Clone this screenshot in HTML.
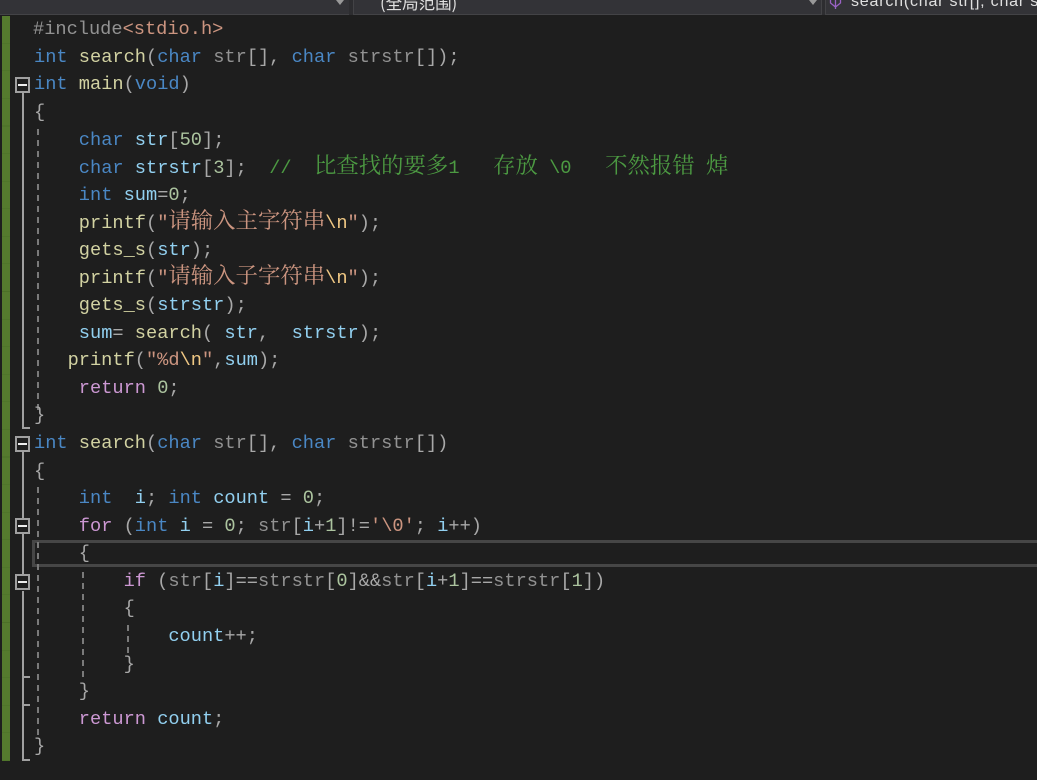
<!DOCTYPE html>
<html lang="zh">
<head>
<meta charset="utf-8">
<style>
html,body{margin:0;padding:0;background:#1e1e1e;}
#r{position:relative;width:1037px;height:780px;overflow:hidden;background:#1e1e1e;font-family:"Liberation Mono","Noto Serif CJK SC",monospace;font-size:18.67px;color:#a8a8a8;}
pre{position:absolute;margin:0;left:34px;height:27.58px;font:inherit;line-height:27.58px;white-space:pre;}
.a{position:absolute;}
.k{color:#4a87c4}.f{color:#d2d2a2}.v{color:#92d0f0}.s{color:#cc9580}.e{color:#f0c884}.c{color:#4c9a42}.p{color:#929292}.n{color:#acc49f}.o{color:#cc98d3}.g{color:#929292}
i{font-style:normal;font-family:"Noto Serif CJK SC","Noto Sans CJK SC",serif;font-size:22.4px;line-height:1;}
.box{position:absolute;left:15px;width:11px;height:12px;border:2px solid #a0a0a0;background:#1e1e1e;}
.box:after{content:"";position:absolute;left:1px;top:5px;width:9px;height:2px;background:#ececec;}
.vl{position:absolute;left:22px;width:2px;background:#a0a0a0;}
.hl{position:absolute;left:22px;width:8px;height:2px;background:#a0a0a0;}
.d{position:absolute;width:2px;background:repeating-linear-gradient(to bottom,#7a7a7a 0,#7a7a7a 6px,transparent 6px,transparent 11px);}
.cb{position:absolute;top:0;height:14px;background:#333337;border-bottom:1px solid #434346;}
.tri{position:absolute;top:0;width:0;height:0;border-left:4px solid transparent;border-right:4px solid transparent;border-top:5px solid #999;}
</style>
</head>
<body>
<div id="r">
  <!-- header combos -->
  <div class="a" style="left:0;top:0;width:1037px;height:15px;background:#2d2d30;"></div>
  <div class="cb" style="left:0;width:349px;"></div>
  <div class="cb" style="left:353px;width:467px;border-left:1px solid #434346;border-right:1px solid #434346;"></div>
  <div class="cb" style="left:825px;width:212px;border-left:1px solid #434346;"></div>
  <div class="tri" style="left:336px;"></div>
  <div class="tri" style="left:809px;"></div>
  <div class="a" style="left:380px;top:-8px;font:16.500px/20px 'Noto Sans CJK SC',sans-serif;color:#e0e0e0;white-space:pre;">(全局范围)</div>
  <div class="a" style="left:851px;top:0;width:186px;height:14px;overflow:hidden;"><div style="position:absolute;left:0;top:-8px;font:16px/20px 'Liberation Sans',sans-serif;letter-spacing:.8px;color:#e0e0e0;white-space:pre;">search(char str[], char str</div></div>
  <svg class="a" style="left:829px;top:0;" width="13" height="10" viewBox="0 0 13 10"><path d="M1.500 0v3l5 4 5-4V0M6.500 0v9" fill="none" stroke="#9a62c4" stroke-width="1.300"/></svg>

  <!-- change bar -->
  <div class="a" style="left:2px;top:16px;width:8px;height:745px;background:repeating-linear-gradient(to bottom,#557a2e 0,#557a2e 27px,#4c7028 27px,#4c7028 27.58px);"></div>

  <!-- current line box -->
  <div class="a" style="left:32px;top:540px;width:1010px;height:21px;border:3px solid #464646;border-right:0;"></div>

  <!-- folds -->
  <div class="vl" style="top:93px;height:335px;"></div><div class="hl" style="top:427px;"></div>
  <div class="box" style="top:77px;"></div>
  <div class="vl" style="top:452px;height:66px;"></div>
  <div class="vl" style="top:534px;height:41px;"></div>
  <div class="vl" style="top:591px;height:170px;"></div>
  <div class="hl" style="top:676px;"></div><div class="hl" style="top:704px;"></div><div class="hl" style="top:759px;"></div>
  <div class="box" style="top:436px;"></div>
  <div class="box" style="top:518px;"></div>
  <div class="box" style="top:574px;"></div>

  <!-- guides -->
  <div class="d" style="left:37px;top:129px;height:284px;"></div>
  <div class="d" style="left:37px;top:487px;height:248px;"></div>
  <div class="d" style="left:82px;top:572px;height:106px;"></div>
  <div class="d" style="left:127px;top:625px;height:28px;"></div>

  <!-- code -->
  <pre style="top:16.200px;left:33px"><span class="g">#include</span><span class="s">&lt;stdio.h&gt;</span></pre>
  <pre style="top:43.800px"><span class="k">int</span> <span class="f">search</span>(<span class="k">char</span> <span class="p">str</span>[], <span class="k">char</span> <span class="p">strstr</span>[]);</pre>
  <pre style="top:71.400px"><span class="k">int</span> <span class="f">main</span>(<span class="k">void</span>)</pre>
  <pre style="top:99px;left:34px">{</pre>
  <pre style="top:126.500px">    <span class="k">char</span> <span class="v">str</span>[<span class="n">50</span>];</pre>
  <pre style="top:153.100px">    <span class="k">char</span> <span class="v">strstr</span>[<span class="n">3</span>];  <span class="c">//  <i>比查找的要多</i>1   <i>存放</i> \0   <i>不然报错</i> <i>焯</i></span></pre>
  <pre style="top:181.700px">    <span class="k">int</span> <span class="v">sum</span>=<span class="n">0</span>;</pre>
  <pre style="top:208.300px">    <span class="f">printf</span>(<span class="s">"<i>请输入主字符串</i></span><span class="e">\n</span><span class="s">"</span>);</pre>
  <pre style="top:236.800px">    <span class="f">gets_s</span>(<span class="v">str</span>);</pre>
  <pre style="top:263.400px">    <span class="f">printf</span>(<span class="s">"<i>请输入子字符串</i></span><span class="e">\n</span><span class="s">"</span>);</pre>
  <pre style="top:292px">    <span class="f">gets_s</span>(<span class="v">strstr</span>);</pre>
  <pre style="top:319.600px">    <span class="v">sum</span>= <span class="f">search</span>( <span class="v">str</span>,  <span class="v">strstr</span>);</pre>
  <pre style="top:347.200px">   <span class="f">printf</span>(<span class="s">"%d</span><span class="e">\n</span><span class="s">"</span>,<span class="v">sum</span>);</pre>
  <pre style="top:374.700px">    <span class="o">return</span> <span class="n">0</span>;</pre>
  <pre style="top:402.300px">}</pre>
  <pre style="top:429.900px"><span class="k">int</span> <span class="f">search</span>(<span class="k">char</span> <span class="p">str</span>[], <span class="k">char</span> <span class="p">strstr</span>[])</pre>
  <pre style="top:457.500px">{</pre>
  <pre style="top:485.100px">    <span class="k">int</span>  <span class="v">i</span>; <span class="k">int</span> <span class="v">count</span> = <span class="n">0</span>;</pre>
  <pre style="top:512.600px">    <span class="o">for</span> (<span class="k">int</span> <span class="v">i</span> = <span class="n">0</span>; <span class="p">str</span>[<span class="v">i</span>+<span class="n">1</span>]!=<span class="s">'\0'</span>; <span class="v">i</span>++)</pre>
  <pre style="top:540.200px">    {</pre>
  <pre style="top:567.800px">        <span class="o">if</span> (<span class="p">str</span>[<span class="v">i</span>]==<span class="p">strstr</span>[<span class="n">0</span>]&amp;&amp;<span class="p">str</span>[<span class="v">i</span>+<span class="n">1</span>]==<span class="p">strstr</span>[<span class="n">1</span>])</pre>
  <pre style="top:595.400px">        {</pre>
  <pre style="top:623px">            <span class="v">count</span>++;</pre>
  <pre style="top:650.500px">        }</pre>
  <pre style="top:678.100px">    }</pre>
  <pre style="top:705.700px">    <span class="o">return</span> <span class="v">count</span>;</pre>
  <pre style="top:733.300px">}</pre>
</div>
</body>
</html>
